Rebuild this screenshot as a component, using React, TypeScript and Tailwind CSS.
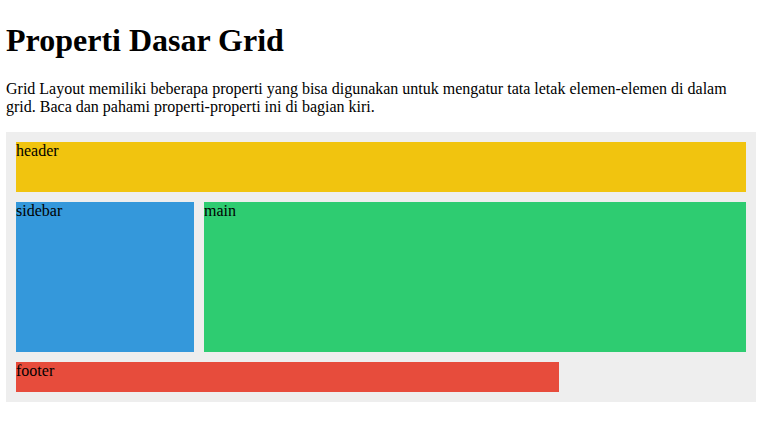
export default function App() {
  return (
    <div className="min-h-[429px] bg-white px-[6px] pt-[21.5px] pb-4 font-['Liberation_Serif','Times_New_Roman',serif] text-black">
      <h1 className="text-[32px] font-bold leading-[normal]">Properti Dasar Grid</h1>
      <p className="mt-[21.5px] w-[750px] text-base leading-[normal]">
        Grid Layout memiliki beberapa properti yang bisa digunakan untuk mengatur tata letak elemen-elemen di dalam
        grid. Baca dan pahami properti-properti ini di bagian kiri.
      </p>
      <div className="mt-4 grid w-[750px] grid-cols-[178px_1fr] grid-rows-[50px_150px_30px] gap-[10px] bg-[#eeeeee] p-[10px] text-base leading-[normal]">
        <div className="col-span-2 bg-[#f1c40f]">header</div>
        <div className="bg-[#3498db]">sidebar</div>
        <div className="bg-[#2ecc71]">main</div>
        <div className="col-span-2 w-[543px] bg-[#e74c3c]">footer</div>
      </div>
    </div>
  );
}
